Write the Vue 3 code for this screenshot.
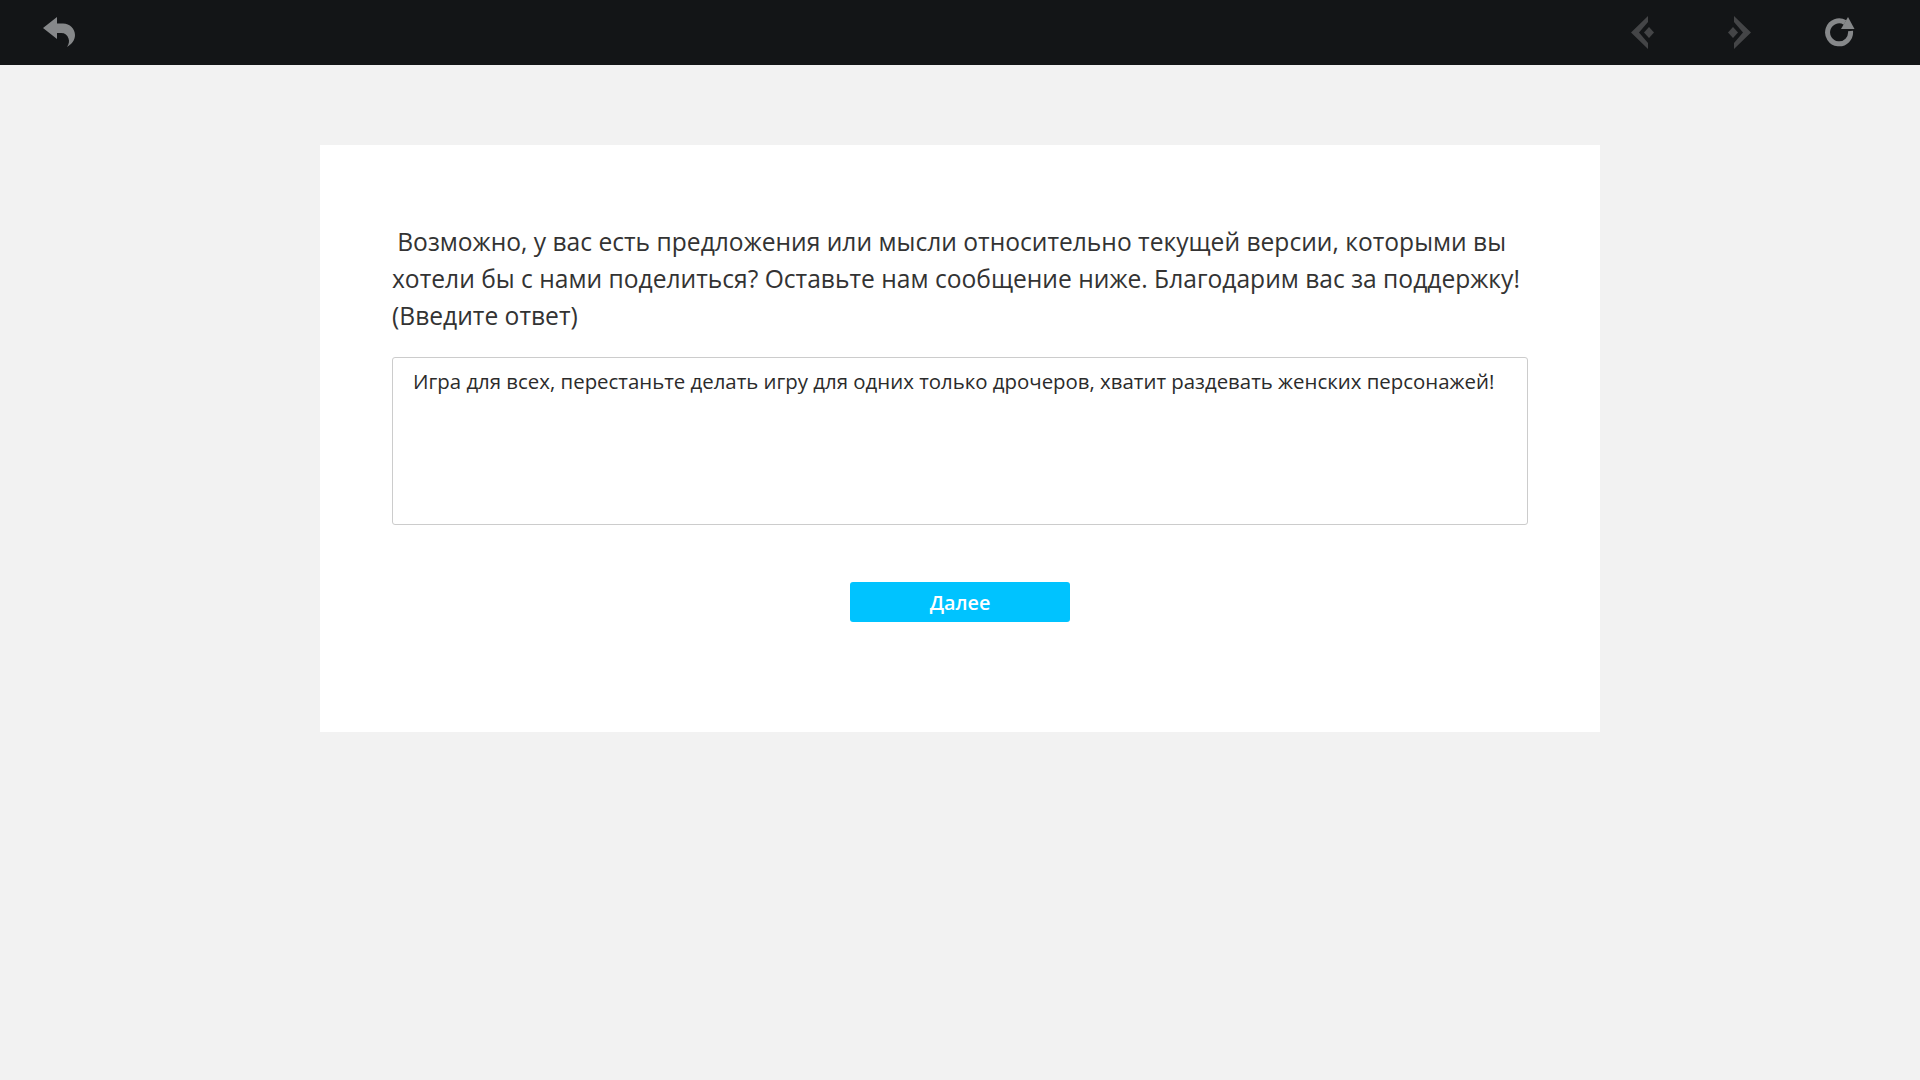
<template>
  <div class="page">
    <header class="topbar">
      <svg class="icon" width="33" height="31" viewBox="0 0 33 31">
        <path d="M0 11 L14 0 V6.5 H20 C27 6.5 32 12 32 18 C32 23 29 27 24 30 C26 27 26.5 24 25.5 21.5 C24.5 18 22 16 18 16 H14 V22 Z" fill="#86888a"/>
      </svg>
      <div class="right">
        <svg class="icon" width="23" height="33" viewBox="0 0 23 33">
          <path d="M17 0 V6 L8 16.5 L17 27 V33 L0 16.5 Z" fill="#444547"/>
          <path d="M18 11 L23 16.5 L18 22 L13 16.5 Z" fill="#444547"/>
        </svg>
        <svg class="icon" width="23" height="33" viewBox="0 0 23 33">
          <path d="M6 0 V6 L15 16.5 L6 27 V33 L23 16.5 Z" fill="#444547"/>
          <path d="M5 11 L10 16.5 L5 22 L0 16.5 Z" fill="#444547"/>
        </svg>
        <svg class="icon" width="30" height="31" viewBox="0 0 30 31">
          <path d="M20 5.5 A11.5 11.5 0 1 0 25.5 14" fill="none" stroke="#86888a" stroke-width="5"/>
          <path d="M23 0 L29.5 12 H16 Z" fill="#86888a"/>
        </svg>
      </div>
    </header>
    <main class="main">
      <section class="card">
        <p class="question"><span class="lead">&nbsp;</span>Возможно, у вас есть предложения или мысли относительно текущей версии, которыми вы хотели бы с нами поделиться? Оставьте нам сообщение ниже. Благодарим вас за поддержку!(Введите ответ)</p>
        <div class="answer">Игра для всех, перестаньте делать игру для одних только дрочеров, хватит раздевать женских персонажей!</div>
        <button class="next">Далее</button>
      </section>
    </main>
  </div>
</template>

<script setup>
</script>

<style>
html, body {
  margin: 0;
  background: #f2f2f2;
}
</style>

<style scoped>
.page {
  height: 1080px;
  font-family: "Open Sans", "Noto Sans", sans-serif;
  display: flex;
  flex-direction: column;
}
.topbar {
  height: 65px;
  background: #131517;
  display: flex;
  align-items: center;
  justify-content: space-between;
  padding: 0 65px 0 43px;
  flex-shrink: 0;
}
.right {
  display: flex;
  align-items: center;
  gap: 74px;
}
.icon {
  display: block;
}
.main {
  flex: 1;
  padding-top: 80px;
}
.card {
  width: 1136px;
  margin: 0 auto;
  background: #fff;
  padding: 78px 72px 110px;
  display: flex;
  flex-direction: column;
  align-items: center;
}
.question {
  margin: 0 0 23px;
  font-size: 24.6px;
  line-height: 37px;
  color: #333;
  align-self: stretch;
}
.lead {
  font-size: 20px;
  line-height: 1;
}
.answer {
  box-sizing: border-box;
  width: 100%;
  height: 168px;
  border: 1px solid #ccc;
  border-radius: 3px;
  padding: 8px 20px;
  font-size: 20.4px;
  line-height: 30px;
  color: #2b2b2b;
}
.next {
  margin-top: 57px;
  width: 220px;
  height: 40px;
  border: none;
  border-radius: 3px;
  background: #00c3ff;
  color: #fff;
  font-family: inherit;
  font-size: 19.8px;
  font-weight: 600;
}
</style>
